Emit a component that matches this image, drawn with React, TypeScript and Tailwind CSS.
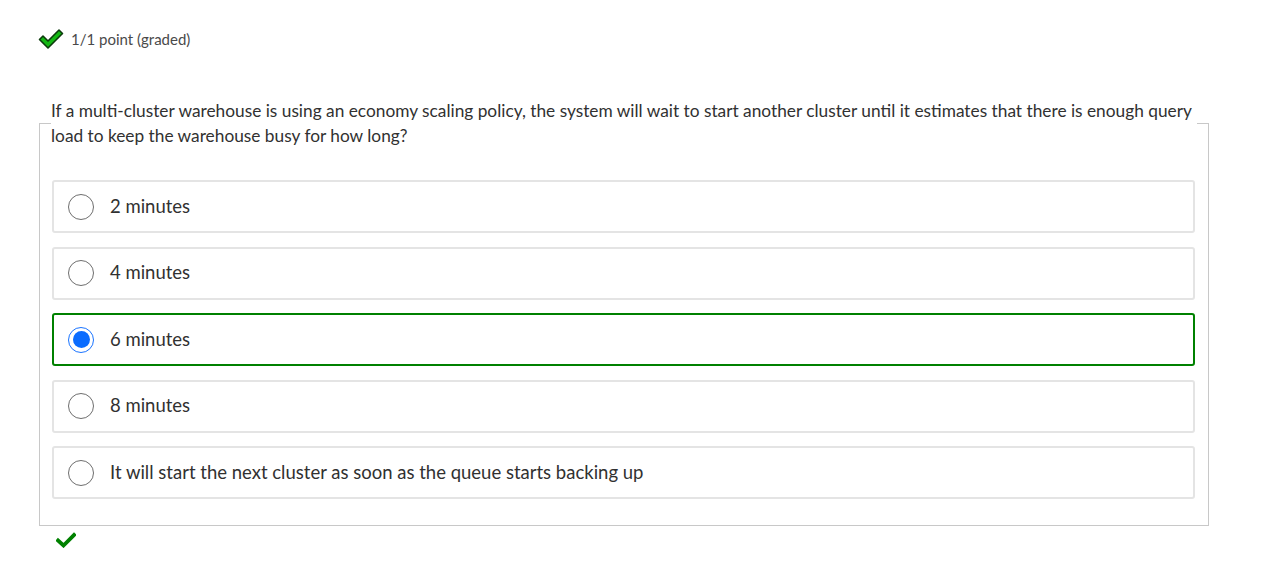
import React from 'react';

const options = [
  { id: 'a', label: '2 minutes' },
  { id: 'b', label: '4 minutes' },
  { id: 'c', label: '6 minutes' },
  { id: 'd', label: '8 minutes' },
  { id: 'e', label: 'It will start the next cluster as soon as the queue starts backing up' },
];

function HeaderCheck() {
  return (
    <svg width="26" height="22" viewBox="0 0 26 22" className="shrink-0">
      <path
        d="M1.5 11.5 L5 8 L10 13 L21 2 L24.5 5.5 L10 20 Z"
        fill="#14b814"
        stroke="#0d3b0d"
        strokeWidth="1.6"
        strokeLinejoin="round"
      />
    </svg>
  );
}

function SmallCheck() {
  return (
    <svg width="20" height="16" viewBox="0 0 20 16">
      <path d="M2 8.5 L7.5 13.5 L18 3" fill="none" stroke="#008100" strokeWidth="3.8" strokeLinecap="square" />
    </svg>
  );
}

function Radio({ checked }: { checked: boolean }) {
  if (checked) {
    return (
      <span className="flex h-[26px] w-[26px] shrink-0 items-center justify-center rounded-full border-[1.5px] border-[#1a74ff] bg-white">
        <span className="h-[17px] w-[17px] rounded-full bg-[#0a6cff]" />
      </span>
    );
  }
  return <span className="h-[26px] w-[26px] shrink-0 rounded-full border-[1.5px] border-[#6e6e6e] bg-white" />;
}

export default function App() {
  const selected = 'c';
  return (
    <div className="min-h-[563px] bg-white font-['Lato','Open_Sans',sans-serif] text-[#313131]">
      <div className="flex items-center gap-[7px] pl-[38px] pt-[28px]">
        <HeaderCheck />
        <span className="text-[15px] leading-[22px] text-[#4a4a4a]">1/1 point (graded)</span>
      </div>

      <fieldset className="mx-[39px] mt-[48px] w-[1170px] border border-[#c8c8c8] px-[11px] pb-[26px]">
        <legend className="p-0 text-[17.3px] leading-[25px] text-[#313131]">
          If a multi-cluster warehouse is using an economy scaling policy, the system will wait to start another cluster until it estimates that there is enough query load to keep the warehouse busy for how long?
        </legend>
        <div className="mt-[32px] flex flex-col gap-[13.5px] pl-[1px] pr-[2px]">
          {options.map((o) => {
            const isSel = o.id === selected;
            return (
              <label
                key={o.id}
                className={
                  isSel
                    ? 'flex h-[53px] items-center rounded-[3px] border-2 border-[#008100] pl-[14px]'
                    : 'flex h-[53px] items-center rounded-[3px] border-2 border-[#e4e4e4] pl-[14px]'
                }
              >
                <Radio checked={isSel} />
                <span className="ml-[16px] text-[18.5px] text-[#313131]">{o.label}</span>
              </label>
            );
          })}
        </div>
      </fieldset>

      <div className="pl-[56px] pt-[6px]">
        <SmallCheck />
      </div>
    </div>
  );
}
